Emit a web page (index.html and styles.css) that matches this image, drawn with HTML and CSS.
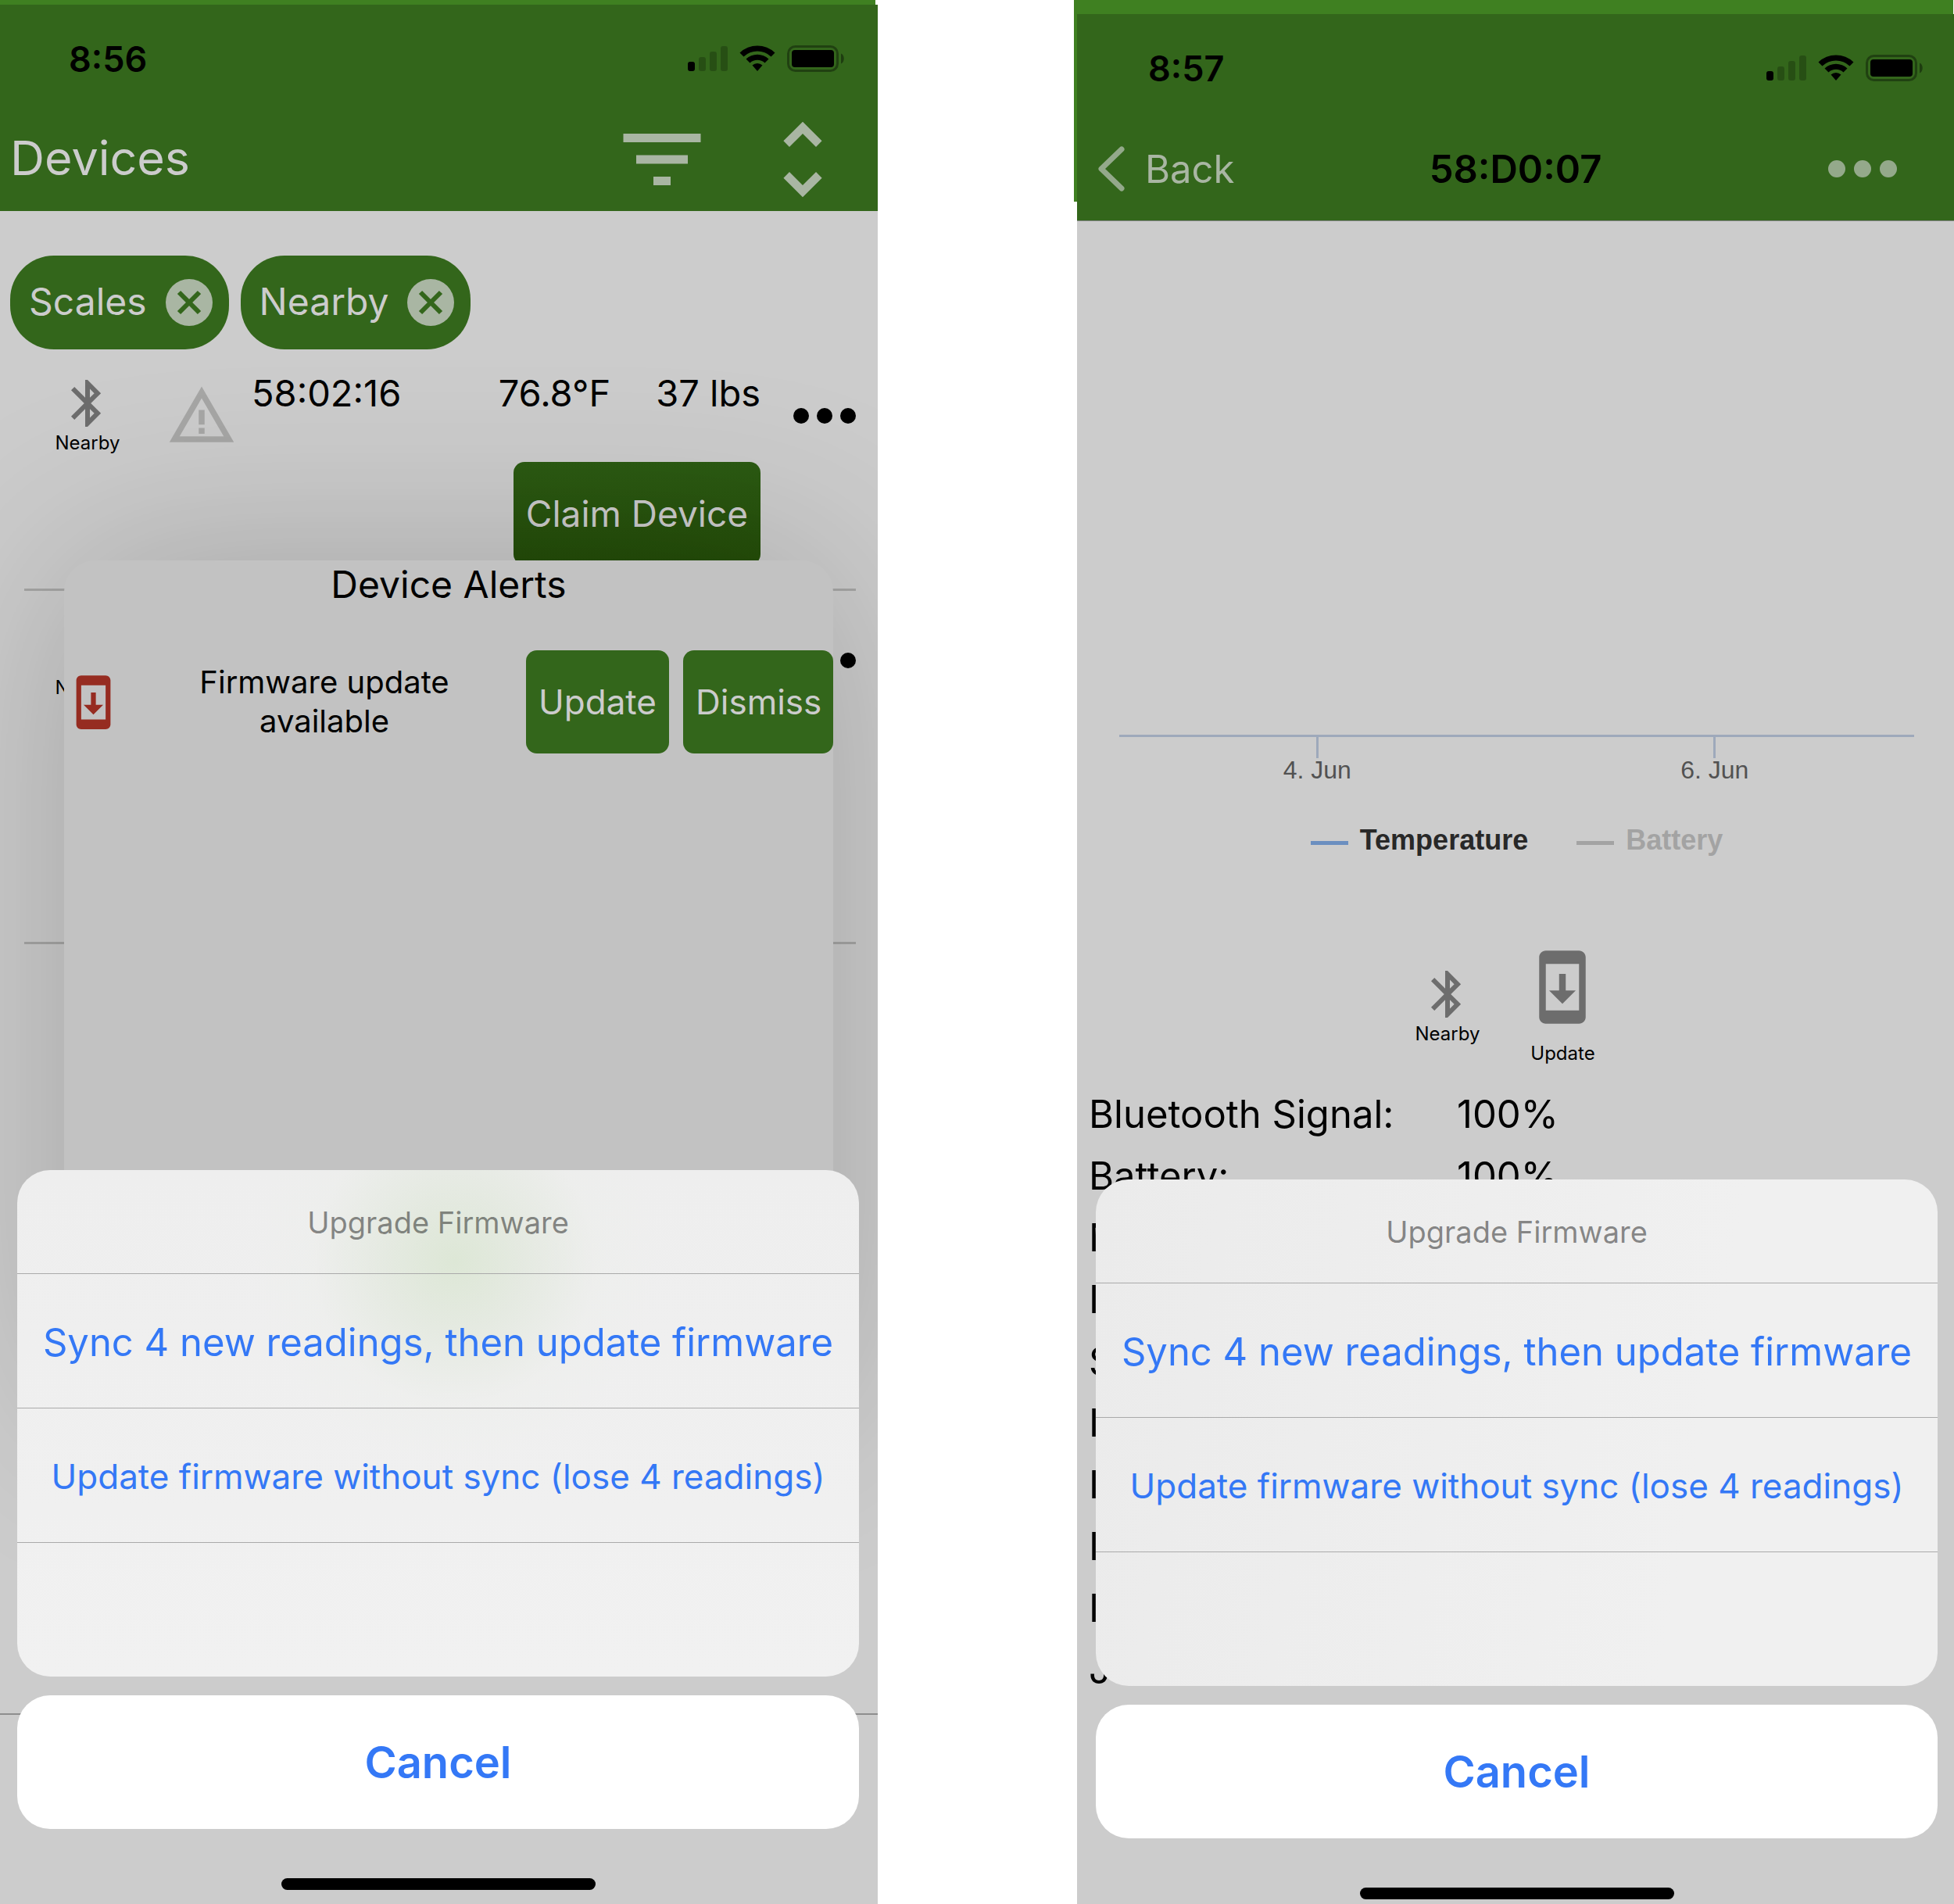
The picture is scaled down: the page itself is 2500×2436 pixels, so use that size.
FILE: index.html
```html
<!DOCTYPE html>
<html lang="en">
<head>
<meta charset="utf-8">
<meta name="viewport" content="width=device-width, initial-scale=1">
<title>Upgrade Firmware</title>
<link rel="stylesheet" href="styles.css">
</head>
<body>
<svg class="defs" aria-hidden="true">
  <symbol id="bluetooth" viewBox="0 0 24 24"><path d="M17.71 7.71L12 2h-1v7.59L6.41 5 5 6.41 10.59 12 5 17.59 6.41 19 11 14.41V22h1l5.71-5.71-4.3-4.29 4.3-4.29zM13 5.83l1.88 1.88L13 9.59V5.83zm1.88 10.46L13 18.17v-3.76l1.88 1.88z"/></symbol>
  <symbol id="system-update" viewBox="0 0 24 24"><path d="M17 1.01L7 1c-1.1 0-2 .9-2 2v18c0 1.1.9 2 2 2h10c1.1 0 2-.9 2-2V3c0-1.1-.9-1.99-2-1.99zM17 19H7V5h10v14zm-1-6h-3V8h-2v5H8l4 4 4-4z"/></symbol>
  <symbol id="clear" viewBox="0 0 60 60"><circle cx="30" cy="30" r="30" class="clear-disc"/><path d="M17 17L43 43M43 17L17 43" class="clear-cross"/></symbol>
  <symbol id="dots" viewBox="0 0 80 20"><circle cx="10" cy="10" r="10"/><circle cx="40" cy="10" r="10"/><circle cx="70" cy="10" r="10"/></symbol>
  <symbol id="status" viewBox="0 0 200 34">
    <rect x="0" y="21" width="9" height="12" rx="3"/>
    <g opacity=".22"><rect x="14" y="15" width="9" height="18" rx="3"/><rect x="28" y="8" width="9" height="25" rx="3"/><rect x="42" y="1" width="9" height="32" rx="3"/></g>
    <path d="M66.500 9.500a32.500 32.500 0 0 1 45 0l-5 5a25.500 25.500 0 0 0-35 0z"/>
    <path d="M74.500 17.500a21 21 0 0 1 29 0l-5 5a14 14 0 0 0-19 0z"/>
    <path d="M82.500 25.500a9.500 9.500 0 0 1 13 0L89 33z"/>
    <rect x="128.500" y="1.500" width="63" height="31" rx="9" fill="none" stroke="#000" stroke-width="3" opacity=".36"/>
    <rect x="133" y="6" width="54" height="22" rx="4"/>
    <path d="M196 10.500c5 2 5 11 0 13z" opacity=".4"/>
  </symbol>
</svg>

<main class="stage">
  <section class="phone phone-list">
    <div class="screen">
      <header class="header">
        <div class="status"><time>8:56</time><svg class="status-icons"><use href="#status"/></svg></div>
        <div class="nav">
          <h1 class="nav-heading">Devices</h1>
          <button class="icon-button" aria-label="Filter"><svg class="nav-icon" viewBox="0 0 24 24"><path d="M10 18h4v-2h-4v2zM3 6v2h18V6H3zm3 7h12v-2H6v2z"/></svg></button>
          <button class="icon-button" aria-label="Sort"><svg class="nav-icon" viewBox="-.3 -.3 24.6 24.6"><path d="M12 5.830L15.170 9l1.410-1.410L12 3 7.410 7.590 8.830 9 12 5.830zm0 12.340L8.830 15l-1.410 1.410L12 21l4.590-4.590L15.170 15 12 18.170z"/></svg></button>
        </div>
      </header>

      <div class="content">
        <div class="chips">
          <button class="chip"><span class="chip-label">Scales</span><svg class="chip-icon"><use href="#clear"/></svg></button>
          <button class="chip"><span class="chip-label">Nearby</span><svg class="chip-icon"><use href="#clear"/></svg></button>
        </div>
        <div class="devices">
          <article class="device">
            <div class="device-state"><svg class="bluetooth"><use href="#bluetooth"/></svg><span class="caption">Nearby</span></div>
            <svg class="warning" viewBox="0 0 24 24"><path d="M12 5.990L19.530 19H4.470L12 5.990M12 2L1 21h22L12 2zm1 14.100h-2v2h2v-2zm0-6.100h-2v5h2v-5z"/></svg>
            <div class="device-main">
              <div class="readings"><span class="device-id">58:02:16</span><span>76.8°F</span><span>37 lbs</span></div>
              <button class="button claim">Claim Device</button>
            </div>
            <button class="icon-button more" aria-label="More"><svg class="more-dots"><use href="#dots"/></svg></button>
          </article>
          <article class="device">
            <div class="device-state"><svg class="bluetooth"><use href="#bluetooth"/></svg><span class="caption">Nearby</span></div>
            <span></span>
            <div class="device-main"></div>
            <button class="icon-button more" aria-label="More"><svg class="more-dots"><use href="#dots"/></svg></button>
          </article>
        </div>

        <section class="alerts">
          <h2 class="alerts-title">Device Alerts</h2>
          <div class="alert">
            <svg class="alert-icon"><use href="#system-update"/></svg>
            <p class="alert-text">Firmware update available</p>
            <div class="alert-actions"><button class="button">Update</button><button class="button">Dismiss</button></div>
          </div>
        </section>
      </div>
      <div class="tab-bar"></div>
    </div>

    <div class="overlay">
      <div class="sheet sheet-tinted">
        <h2 class="sheet-title">Upgrade Firmware</h2>
        <button class="sheet-action">Sync 4 new readings, then update firmware</button>
        <button class="sheet-action sheet-action-long">Update firmware without sync (lose 4 readings)</button>
        <div class="sheet-action"></div>
      </div>
      <button class="cancel">Cancel</button>
      <div class="home-bar"></div>
    </div>
  </section>

  <section class="phone phone-detail">
    <div class="screen">
      <header class="header header-lined">
        <div class="status"><time>8:57</time><svg class="status-icons"><use href="#status"/></svg></div>
        <div class="nav nav-detail">
          <a class="back" href="#"><svg class="back-icon" viewBox="0 0 34 58"><path d="M30 4L4 29L30 54"/></svg>Back</a>
          <h1 class="nav-title">58:D0:07</h1>
          <button class="icon-button" aria-label="More"><svg class="nav-dots" viewBox="0 0 88 22"><circle cx="11" cy="11" r="11"/><circle cx="44" cy="11" r="11"/><circle cx="77" cy="11" r="11"/></svg></button>
        </div>
      </header>

      <div class="chart">
        <div class="axis"><span class="tick">4. Jun</span><span class="tick">6. Jun</span></div>
        <div class="legend"><span class="series">Temperature</span><span class="series series-off">Battery</span></div>
      </div>

      <div class="states">
        <div class="state state-near"><svg class="bluetooth"><use href="#bluetooth"/></svg><span class="caption">Nearby</span></div>
        <div class="state state-update"><svg class="update-icon"><use href="#system-update"/></svg><span class="caption">Update</span></div>
      </div>

      <table class="facts">
        <tr><th scope="row">Bluetooth Signal:</th><td>100%</td></tr>
        <tr><th scope="row">Battery:</th><td>100%</td></tr>
        <tr><th scope="row">N</th><td></td></tr>
        <tr><th scope="row">I</th><td></td></tr>
        <tr><th scope="row">S</th><td></td></tr>
        <tr><th scope="row">I</th><td></td></tr>
        <tr><th scope="row">I</th><td></td></tr>
        <tr><th scope="row">I</th><td></td></tr>
        <tr><th scope="row">I</th><td></td></tr>
        <tr><th scope="row">J</th><td></td></tr>
      </table>
    </div>

    <div class="overlay">
      <div class="sheet">
        <h2 class="sheet-title">Upgrade Firmware</h2>
        <button class="sheet-action">Sync 4 new readings, then update firmware</button>
        <button class="sheet-action sheet-action-long">Update firmware without sync (lose 4 readings)</button>
        <div class="sheet-action"></div>
      </div>
      <button class="cancel">Cancel</button>
      <div class="home-bar"></div>
    </div>
  </section>
</main>
</body>
</html>
```
FILE: styles.css
```css
* { box-sizing: border-box; }

body {
  margin: 0;
  background: #fff;
  color: #000;
  font-family: Inter, "Liberation Sans", sans-serif;
}

h1, h2, p { margin: 0; font-weight: 400; }

button {
  border: 0;
  padding: 0;
  background: none;
  color: inherit;
  font: inherit;
}

.defs { position: absolute; width: 0; height: 0; }
.clear-disc { fill: #a9b6a3; }
.clear-cross { stroke: #33661b; stroke-width: 6; }

/* Two phones side by side */
.stage {
  display: grid;
  grid-template-columns: 1123fr 1122fr;
  column-gap: 255px;
  min-height: 100vh;
}

.phone {
  position: relative;
  display: flex;
  flex-direction: column;
  isolation: isolate;
}
.phone::before {
  content: "";
  position: absolute;
  z-index: -1;
  top: 0;
  background: #3f8021;
}
.phone-list { padding-top: 6px; }
.phone-list::before { left: 0; right: 3px; height: 20px; }
.phone-detail { padding-top: 18px; }
.phone-detail::before { left: -4px; right: 1px; height: 258px; }

.screen {
  flex: 1;
  display: flex;
  flex-direction: column;
  overflow: hidden;
  background: #ccc;
}

/* Header */
.header {
  position: relative;
  z-index: 2;
  background: #33661b;
}
.header-lined { border-bottom: 1px solid #858585; }
.status {
  display: flex;
  align-items: center;
  justify-content: space-between;
  height: 138px;
  padding: 0 43px 0 88px;
  font-size: 45px;
  font-weight: 600;
}
.phone-detail .status { padding: 0 40px 0 91px; }
.status-icons { width: 200px; height: 34px; }
.nav {
  display: flex;
  align-items: center;
  height: 126px;
  padding: 0 30px 6px 13px;
}
.nav-heading {
  flex: 1;
  padding-bottom: 4px;
  color: #ccc;
  font-size: 61px;
}
.icon-button { display: block; line-height: 0; }
.nav-icon { width: 132px; height: 132px; margin-left: 48px; fill: #a9b6a3; }
.nav-detail {
  display: grid;
  grid-template-columns: 1fr auto 1fr;
  padding: 0 27px 6px;
}
.nav-detail .icon-button { justify-self: end; margin-right: 46px; }
.back {
  display: flex;
  align-items: center;
  gap: 26px;
  color: #a9b6a3;
  font-size: 49px;
  text-decoration: none;
}
.back-icon {
  width: 34px;
  height: 58px;
  fill: none;
  stroke: #94a98b;
  stroke-width: 7;
  stroke-linecap: round;
  stroke-linejoin: round;
}
.nav-title { font-size: 49px; font-weight: 600; }
.nav-dots { width: 88px; height: 22px; fill: #94a98b; }

/* Device list */
.content { position: relative; flex: 1; }
.chips { display: flex; gap: 15px; padding: 57px 13px 0; }
.chip {
  display: flex;
  align-items: center;
  gap: 24px;
  height: 120px;
  padding: 0 21px 0 24px;
  border-radius: 56px;
  background: #33661b;
  color: #ccc;
  font-size: 48px;
}
.chip-label { padding-bottom: 4px; }
.chip-icon { width: 60px; height: 60px; }

.device {
  display: grid;
  grid-template-columns: 162px 129px 1fr 122px;
  align-items: start;
  height: 309px;
  margin: 0 28px 0 31px;
  padding-top: 24px;
  border-bottom: 3px solid #a6a6a5;
}
.device + .device { height: 452px; padding-top: 28px; }
.device-state {
  display: flex;
  flex-direction: column;
  align-items: center;
  padding-top: 9px;
}
.bluetooth { width: 72px; height: 72px; fill: #6d6d6d; }
.caption { font-size: 24px; line-height: 29px; }
.warning { width: 90px; height: 90px; margin: 16px auto 0; fill: #a6a6a5; }
.device-main { display: flex; flex-direction: column; align-items: flex-end; gap: 56px; }
.readings {
  display: flex;
  gap: 58px;
  align-self: stretch;
  font-size: 47px;
  line-height: 64px;
  white-space: nowrap;
}
.device-id { flex: 1; }
.more { justify-self: end; margin-top: 51px; }
.more-dots { width: 80px; height: 20px; }

.button {
  height: 132px;
  padding: 0 16px;
  border-radius: 14px;
  background: #33661b;
  color: #ccc;
  font-size: 44px;
  white-space: nowrap;
}
.claim { background: linear-gradient(#2c5b13, #244d08); font-size: 46px; }

/* Alert card over the list */
.alerts {
  position: absolute;
  z-index: 1;
  top: 447px;
  left: 82px;
  right: 57px;
  height: 1090px;
  border-radius: 40px;
  background: #c2c2c2;
  box-shadow: 0 0 400px rgba(0, 0, 0, .2);
}
.alerts-title { font-size: 48px; line-height: 62px; text-align: center; }
.alert { display: flex; align-items: center; margin-top: 53px; }
.alert-icon { width: 75px; height: 75px; fill: #962c21; }
.alert-text {
  flex: 1;
  padding: 0 80px;
  font-size: 40px;
  line-height: 50px;
  text-align: center;
}
.alert-actions { display: grid; grid-template-columns: 183px 192px; gap: 18px; }

.tab-bar { height: 244px; border-top: 2px solid #8e8e8e; }

/* Device detail */
.chart { padding: 657px 51px 0 54px; }
.axis {
  display: grid;
  grid-template-columns: 1fr 1fr;
  border-top: 3px solid #9ea9bb;
}
.tick {
  display: flex;
  flex-direction: column;
  align-items: center;
  padding-right: 2px;
  color: #525252;
  font: 32px/30px "Liberation Sans", Arial, sans-serif;
}
.tick::before { content: ""; width: 3px; height: 27px; background: #9ea9bb; }
.legend {
  display: flex;
  justify-content: center;
  gap: 62px;
  margin-top: 57px;
  color: #282828;
  font: bold 36px/36px "Liberation Sans", Arial, sans-serif;
}
.series { display: flex; align-items: center; gap: 15px; }
.series::before { content: ""; width: 48px; height: 5px; margin-top: 6px; background: #6b8fc0; }
.series-off { color: #a3a3a3; }
.series-off::before { background: #a3a3a3; }

.states {
  display: flex;
  justify-content: center;
  align-items: flex-start;
  gap: 55px;
  margin-top: 119px;
  padding-right: 17px;
}
.state { display: flex; flex-direction: column; align-items: center; }
.state-near { padding-top: 24px; }
.state-update { gap: 19px; }
.update-icon { width: 102px; height: 102px; fill: #6d6d6d; }

.facts {
  width: 100%;
  margin-top: 24px;
  border-collapse: collapse;
  table-layout: fixed;
  font-size: 49px;
  line-height: 79px;
}
.facts tr { height: 79px; }
.facts th { width: 486px; padding: 0 0 0 15px; font-weight: 400; text-align: left; }
.facts td { padding: 0; }

/* Action sheet */
.overlay {
  position: absolute;
  z-index: 3;
  left: 0;
  right: 0;
  bottom: 0;
  display: flex;
  flex-direction: column;
  padding: 0 24px 18px 22px;
}
.phone-detail .overlay { bottom: -12px; padding: 0 21px 18px 24px; }
.sheet {
  border-radius: 42px;
  overflow: hidden;
  background: linear-gradient(100deg, #ebebeb, #f0f0f0 70%);
}
.sheet-tinted {
  background:
    radial-gradient(circle 260px at 52% 18%, #dde7d6, rgba(225, 232, 220, .7) 35%, rgba(236, 238, 234, .35) 70%, rgba(238, 238, 238, 0)),
    linear-gradient(#eee, #f1f1f1);
}
.sheet-title {
  height: 132px;
  color: rgba(0, 0, 0, .46);
  font-size: 38px;
  line-height: 134px;
  text-align: center;
}
.sheet-action {
  display: block;
  width: 100%;
  height: 172px;
  padding-top: 3px;
  border-top: 1px solid #aaa;
  color: #3478f6;
  font-size: 49px;
  text-align: center;
  white-space: nowrap;
}
.sheet-action-long { font-size: 44px; }
.cancel {
  height: 171px;
  margin-top: 24px;
  border-radius: 42px;
  background: #fff;
  color: #3478f6;
  font-size: 56px;
  font-weight: 600;
}
.home-bar {
  align-self: center;
  width: 402px;
  height: 15px;
  margin-top: 63px;
  border-radius: 8px;
  background: #000;
}
```
